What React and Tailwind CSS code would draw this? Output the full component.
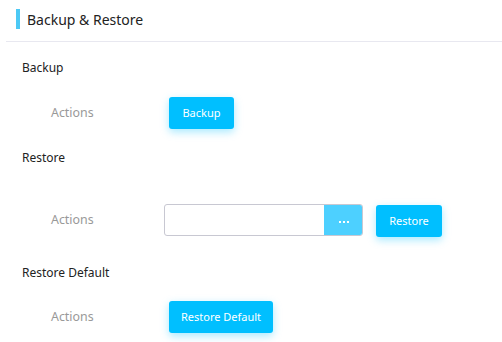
import React from "react";

function Btn({ children, className = "" }) {
  return (
    <button
      className={
        "h-[32px] rounded-[3px] bg-[#00bfff] text-white text-[11px] shadow-[0_3px_8px_rgba(0,191,255,0.35)] " +
        className
      }
    >
      {children}
    </button>
  );
}

function SectionTitle({ children, className = "" }) {
  return (
    <div className={"h-[20px] pl-[22px] text-[12px] leading-[20px] text-[#222] " + className}>
      {children}
    </div>
  );
}

function ActionRow({ children, className = "" }) {
  return (
    <div className={"flex items-center " + className}>
      <div className="w-[169px] pl-[51px] text-[12.4px] text-[#999]">Actions</div>
      {children}
    </div>
  );
}

export default function App() {
  return (
    <div
      className="w-[502px] h-[342px] bg-white overflow-hidden"
      style={{ fontFamily: '"Noto Sans", "Open Sans", sans-serif' }}
    >
      <div className="h-[41px] flex items-center pl-[16px]">
        <div className="w-[4px] h-[20px] bg-[#4cc9f5] mt-[-3px]" />
        <div className="ml-[7px] text-[14px] text-[#222] mt-[-3px]">Backup &amp; Restore</div>
      </div>
      <div className="ml-[6px] h-px bg-[#e8e8f0]" />

      <SectionTitle className="mt-[16px]">Backup</SectionTitle>
      <ActionRow className="mt-[19px]">
        <Btn className="w-[65px]">Backup</Btn>
      </ActionRow>

      <SectionTitle className="mt-[19px]">Restore</SectionTitle>
      <ActionRow className="mt-[35px]">
        <div className="ml-[-5px] flex h-[32px] w-[199px] rounded-[3px] border border-[#c8c8d2] overflow-hidden">
          <div className="flex-1" />
          <div className="w-[39px] bg-[#4dd0ff] mr-[-1px] my-[-1px] rounded-r-[3px] flex items-center justify-center gap-[2px] pt-[3px]">
            <span className="w-[2px] h-[2px] bg-white" />
            <span className="w-[2px] h-[2px] bg-white" />
            <span className="w-[2px] h-[2px] bg-white" />
          </div>
        </div>
        <Btn className="ml-[13px] w-[66px] mt-[2px]">Restore</Btn>
      </ActionRow>

      <SectionTitle className="mt-[26px]">Restore Default</SectionTitle>
      <ActionRow className="mt-[18px]">
        <Btn className="w-[104px]">Restore Default</Btn>
      </ActionRow>
    </div>
  );
}
